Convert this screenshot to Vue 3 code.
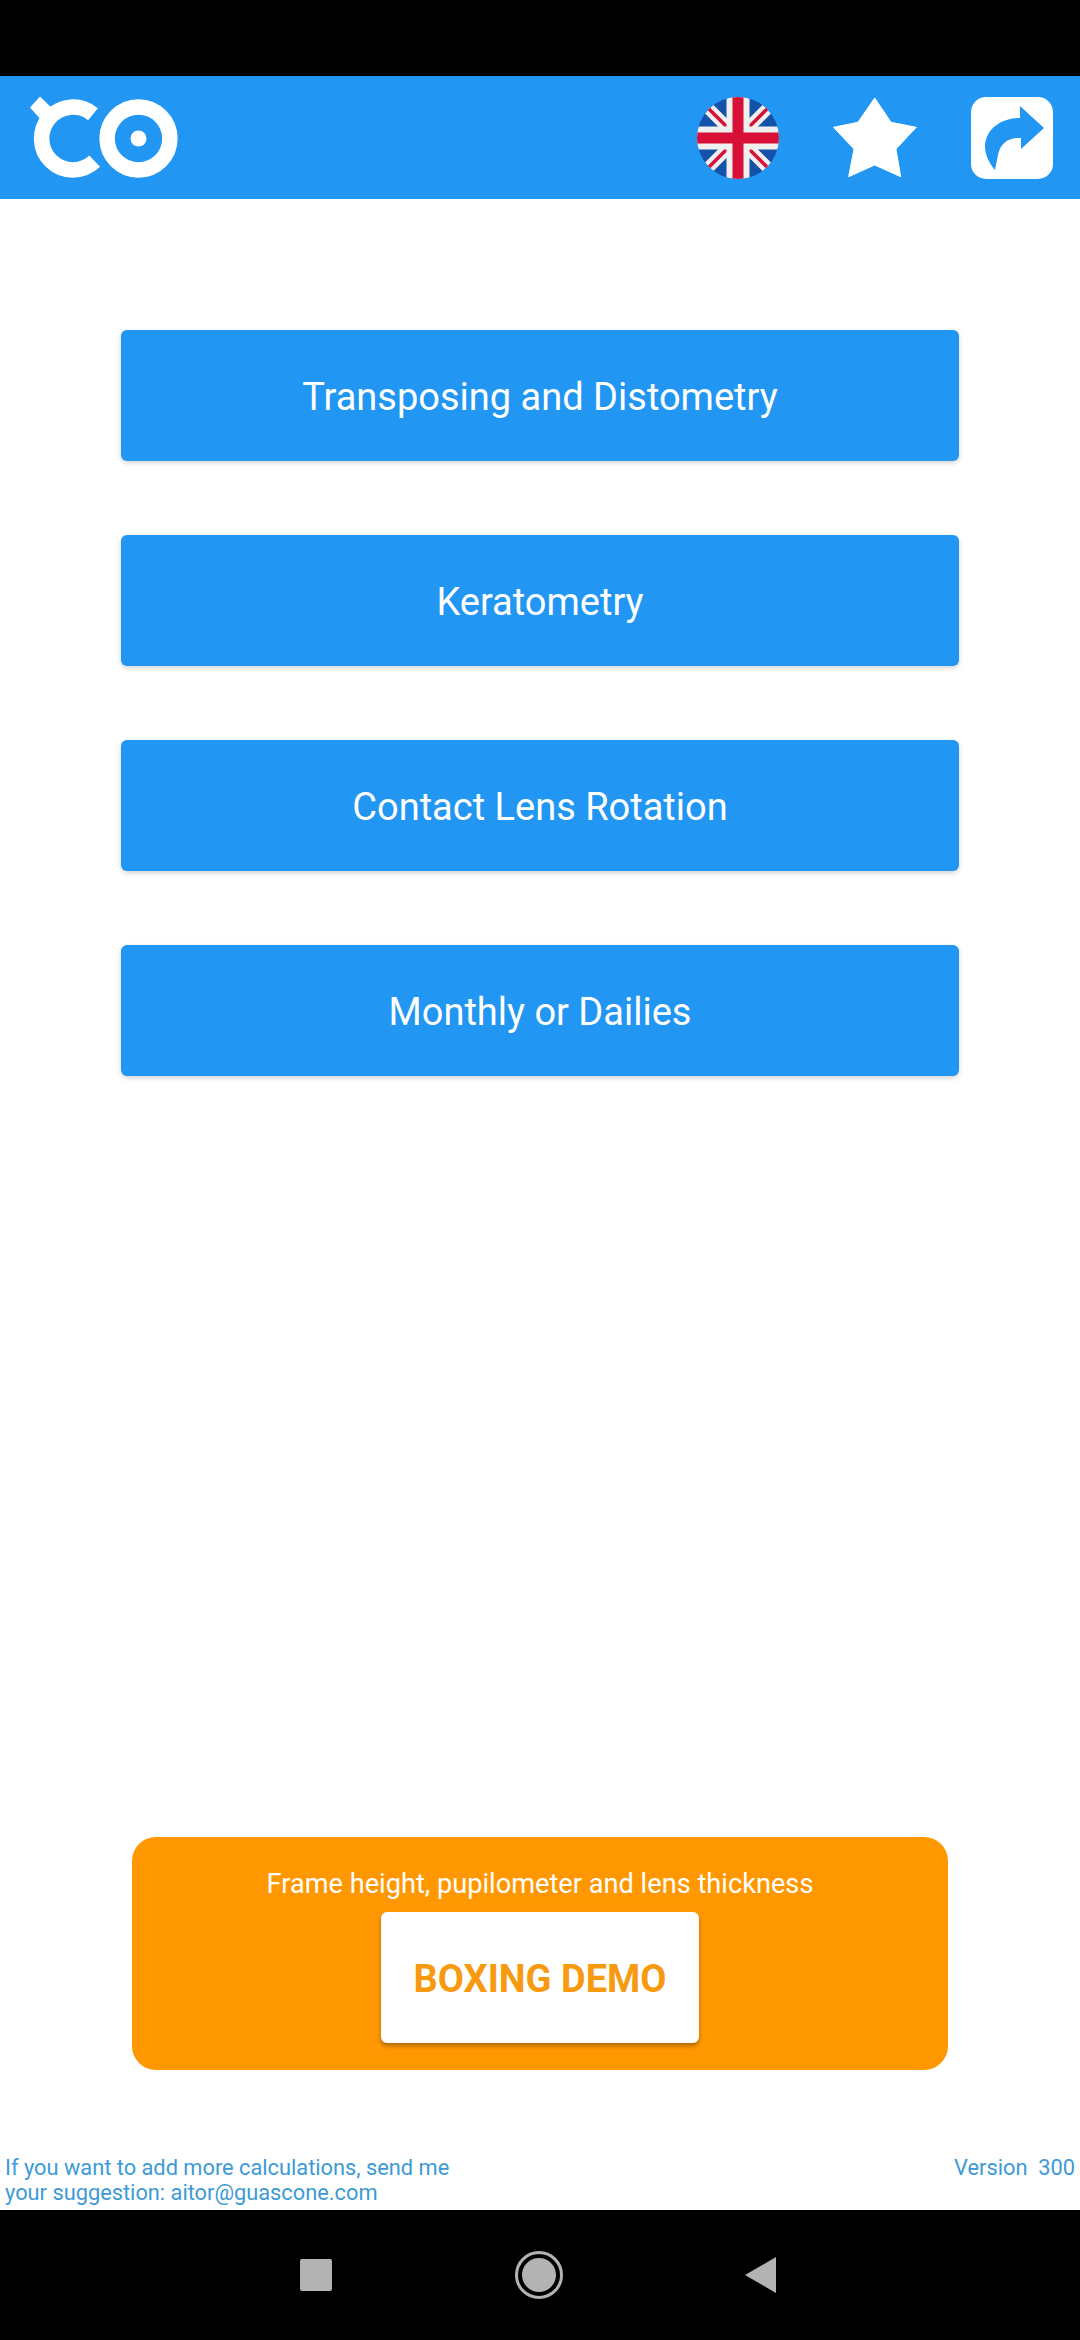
<template>
  <div class="screen">
    <div class="status"></div>

    <header class="bar">
      <svg class="logo" viewBox="0 0 155 86" aria-label="Logo">
        <path d="M67 19.300 A31.400 31.400 0 1 0 68.700 66.200" fill="none" stroke="#fff" stroke-width="15.500" />
        <path d="M4 12.500 L14 1.500 L28 15 L16 26 Z" fill="#fff" />
        <circle cx="112.500" cy="43.500" r="31.400" fill="none" stroke="#fff" stroke-width="15.500" />
        <circle cx="112.500" cy="43.500" r="8" fill="#fff" />
      </svg>
      <div class="actions">
        <svg class="icon" viewBox="0 0 82 82" aria-label="English">
          <defs>
            <clipPath id="disc"><circle cx="41" cy="41" r="41" /></clipPath>
          </defs>
          <g clip-path="url(#disc)">
            <rect width="82" height="82" fill="#1451a8" />
            <path d="M0 0 L82 82 M82 0 L0 82" stroke="#f0f0f0" stroke-width="12" />
            <path d="M9 9 L34 34 M73 9 L48 34 M9 73 L34 48 M73 73 L48 48" stroke="#d80f36" stroke-width="3.500" />
            <path d="M41 0 V82 M0 41 H82" stroke="#f0f0f0" stroke-width="23" />
            <path d="M41 0 V82 M0 41 H82" stroke="#d80f36" stroke-width="11" />
          </g>
        </svg>
        <svg class="icon star" viewBox="0 0 84 80" aria-label="Favourite">
          <path d="M41.700 0 L58 24.300 L83.300 29.300 L63 51 L67.700 78.700 L41.700 67 L15.700 78.700 L21 51 L0.500 29.300 L25 24.300 Z" fill="#fff" stroke="#fff" stroke-width="1" stroke-linejoin="round" />
        </svg>
        <svg class="icon" viewBox="0 0 82 82" aria-label="Share">
          <rect width="82" height="82" rx="15" fill="#fff" />
          <path d="M49 9 L73 31 L50 52 L50 41 C38 40 29 46 27 58 L24 73 C17 65 14 56 14 49 C15 32 30 21 49 21 Z" fill="#2196f3" />
        </svg>
      </div>
    </header>

    <main class="content">
      <nav class="menu">
        <button v-for="item in items" :key="item" class="menu-btn">{{ item }}</button>
      </nav>

      <section class="promo">
        <p class="promo-text">Frame height, pupilometer and lens thickness</p>
        <button class="demo-btn">BOXING DEMO</button>
      </section>

      <footer class="foot">
        <div>If you want to add more calculations, send me<br />your suggestion: aitor@guascone.com</div>
        <div class="version">Version&nbsp; 300</div>
      </footer>
    </main>

    <div class="nav">
      <span class="nav-square"></span>
      <span class="nav-circle"></span>
      <svg class="nav-back" viewBox="0 0 32 36"><path d="M32 0 V36 L1 18 Z" fill="#b3b3b3" /></svg>
    </div>
  </div>
</template>

<script setup>
const items = [
  'Transposing and Distometry',
  'Keratometry',
  'Contact Lens Rotation',
  'Monthly or Dailies'
]
</script>

<style scoped>
.screen {
  width: 1080px;
  height: 2340px;
  display: flex;
  flex-direction: column;
  background: #fff;
  font-family: Roboto, "Liberation Sans", sans-serif;
}
.status { height: 76px; background: #000; flex: none; }
.bar {
  height: 123px;
  flex: none;
  background: #2196f3;
  display: flex;
  align-items: center;
  justify-content: space-between;
  padding: 0 27px 0 26px;
}
.logo { width: 155px; height: 86px; }
.actions { display: flex; align-items: center; gap: 54px; }
.icon { width: 82px; height: 82px; display: block; }
.star { width: 84px; height: 80px; }
.content {
  flex: 1;
  display: flex;
  flex-direction: column;
  min-height: 0;
}
.menu {
  display: flex;
  flex-direction: column;
  gap: 74px;
  padding: 131px 121px 0;
}
.menu-btn {
  height: 131px;
  border: 0;
  border-radius: 6px;
  background: #2196f3;
  color: #fff;
  font: 400 38px Roboto, "Liberation Sans", sans-serif;
  box-shadow: 0 2px 5px rgba(0, 0, 0, 0.18);
  padding: 2px 0 0;
}
.promo {
  margin: auto 132px 0;
  height: 233px;
  border-radius: 24px;
  background: #ff9800;
  display: flex;
  flex-direction: column;
  align-items: center;
  padding-top: 31px;
  box-sizing: border-box;
}
.promo-text {
  margin: 0 0 12px;
  color: #fff;
  font-size: 27.200px;
  line-height: 32px;
}
.demo-btn {
  width: 318px;
  height: 131px;
  border: 0;
  border-radius: 6px;
  background: #fff;
  color: #f79a10;
  font: 700 38px Roboto, "Liberation Sans", sans-serif;
  box-shadow: 0 3px 4px rgba(0, 0, 0, 0.3);
  padding: 2px 0 0;
}
.foot {
  display: flex;
  justify-content: space-between;
  align-items: flex-start;
  margin-top: 85px;
  height: 55px;
  padding: 0 5px;
  color: #3d9ad6;
  font-size: 21.800px;
  line-height: 25px;
}
.nav {
  height: 130px;
  flex: none;
  background: #000;
  position: relative;
}
.nav-square {
  position: absolute;
  left: 300px;
  top: 49px;
  width: 32px;
  height: 32px;
  border-radius: 2px;
  background: #b3b3b3;
}
.nav-circle {
  position: absolute;
  left: 515px;
  top: 41px;
  width: 48px;
  height: 48px;
  box-sizing: border-box;
  border: 3px solid #b3b3b3;
  border-radius: 50%;
}
.nav-circle::after {
  content: "";
  position: absolute;
  inset: 4px;
  border-radius: 50%;
  background: #b3b3b3;
}
.nav-back {
  position: absolute;
  left: 744px;
  top: 47px;
  width: 32px;
  height: 36px;
}
</style>
